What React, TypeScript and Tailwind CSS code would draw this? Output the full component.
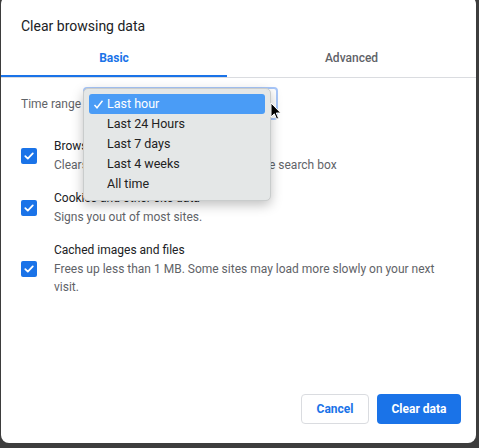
import React from "react";

const Check = () => (
  <div className="w-4 h-4 rounded-[2px] bg-[#1a73e8] flex items-center justify-center shrink-0">
    <svg width="12" height="12" viewBox="0 0 12 12">
      <path d="M2.3 6.2 L4.8 8.6 L9.8 3.4" stroke="white" strokeWidth="1.8" fill="none" strokeLinecap="round" strokeLinejoin="round" />
    </svg>
  </div>
);

function Row({ title, sub }: { title: string; sub: React.ReactNode }) {
  return (
    <div className="flex items-center">
      <div className="w-[33px] shrink-0">
        <Check />
      </div>
      <div className="flex flex-col">
        <div className="text-[12px] leading-[18.5px] text-[#202124]">{title}</div>
        <div className="text-[12px] leading-[18.5px] text-[#5f6368]">{sub}</div>
      </div>
    </div>
  );
}

export default function App() {
  return (
    <div
      className="w-[479px] h-[448px] bg-[#3d3d3d] overflow-hidden relative"
      style={{ fontFamily: "Roboto, 'Liberation Sans', sans-serif" }}
    >
      <div className="ml-[1px] mt-[-4px] w-[475px] h-[447px] bg-white rounded-[8px] flex flex-col relative">
        <div className="pl-[20px] pt-[21px] text-[14px] leading-[18px] text-[#202124]">Clear browsing data</div>
        <div className="mt-[12px] flex border-b border-[#dadce0] h-[31px]">
          <div className="w-[226px] flex justify-center border-b-2 border-[#1a73e8] text-[12px] font-bold text-[#1a73e8] leading-[18px] pt-[2px]">
            Basic
          </div>
          <div className="flex-1 flex justify-center text-[12px] font-medium text-[#5f6368] leading-[18px] pt-[2px]">
            Advanced
          </div>
        </div>
        <div className="flex items-center pl-[20px] mt-[9px] h-[33px]">
          <div className="text-[12px] text-[#5f6368] w-[62px] whitespace-nowrap">Time range</div>
          <div className="w-[195px] h-[33px] rounded-[4px] border-2 border-[#a8c7fa] bg-white" />
        </div>
        <div className="pl-[20px] pr-[20px] mt-[17px] flex flex-col gap-[15px]">
          <Row title="Browsing history" sub="Clears history and autocompletions in the search box" />
          <Row title="Cookies and other site data" sub="Signs you out of most sites." />
          <Row
            title="Cached images and files"
            sub={<>Frees up less than 1 MB. Some sites may load more slowly on your next visit.</>}
          />
        </div>
        <div className="mt-auto mb-[19px] mr-[15px] flex justify-end gap-[8px]">
          <button className="w-[68px] h-[30px] rounded-[4px] border border-[#dadce0] bg-white text-[#1a73e8] text-[12px] font-bold">
            Cancel
          </button>
          <button className="w-[84px] h-[30px] rounded-[4px] bg-[#1a73e8] text-white text-[12px] font-bold">
            Clear data
          </button>
        </div>

        {/* dropdown overlay */}
        <div className="absolute left-[82px] top-[92px] w-[188px] h-[113px] rounded-[5px] bg-[#e4e7e7] border border-[#c9cccc] shadow-[0_4px_12px_rgba(0,0,0,0.25)] pt-[5px] px-[5px] flex flex-col">
          <div className="h-[20px] rounded-[3px] bg-[#4a9cf6] text-white text-[12.5px] flex items-center">
            <span className="w-[18px] pl-[4px] flex items-center">
              <svg width="11" height="11" viewBox="0 0 11 11">
                <path d="M1.5 6 L4 8.8 L9.5 1.8" stroke="white" strokeWidth="1.4" fill="none" />
              </svg>
            </span>
            Last hour
          </div>
          {["Last 24 Hours", "Last 7 days", "Last 4 weeks", "All time"].map((t) => (
            <div key={t} className="h-[20px] pl-[18px] text-[12.5px] text-[#222] flex items-center">
              {t}
            </div>
          ))}
        </div>
        {/* cursor */}
        <svg className="absolute left-[269px] top-[106px]" width="12" height="19" viewBox="0 0 12 19">
          <path d="M1 1 L1 15 L4.3 11.8 L6.6 17.2 L8.6 16.3 L6.3 11 L10.8 11 Z" fill="black" stroke="white" strokeWidth="1" />
        </svg>
      </div>
    </div>
  );
}
